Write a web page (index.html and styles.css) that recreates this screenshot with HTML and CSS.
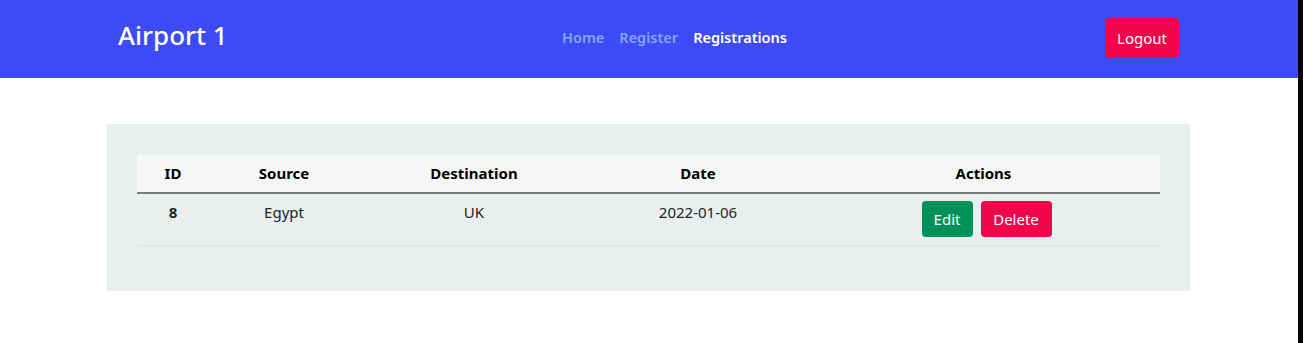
FILE: index.html
```html
<!DOCTYPE html>
<html lang="en">
<head>
    <meta charset="UTF-8">
    <meta name="viewport" content="width=device-width, initial-scale=1.0">
    <title>Airport 1 - Registrations</title>
    <link rel="stylesheet" href="styles.css">
</head>
<body>
    <!-- Top bar -->
    <header class="topbar">
        <div class="brand">Airport 1</div>
        <nav class="nav">
            <a href="#" class="nav-link">Home</a>
            <a href="#" class="nav-link">Register</a>
            <a href="#" class="nav-link active">Registrations</a>
        </nav>
        <button class="btn btn-red btn-logout">Logout</button>
    </header>

    <div class="card">
        <table class="reg-table">
            <thead>
                <tr>
                    <th class="col-id">ID</th>
                    <th class="col-source">Source</th>
                    <th class="col-dest">Destination</th>
                    <th class="col-date">Date</th>
                    <th class="col-actions">Actions</th>
                </tr>
            </thead>
            <tbody>
                <tr>
                    <td class="id-cell">8</td>
                    <td>Egypt</td>
                    <td>UK</td>
                    <td>2022-01-06</td>
                    <td>
                        <div class="actions">
                            <button class="btn btn-green">Edit</button>
                            <button class="btn btn-red">Delete</button>
                        </div>
                    </td>
                </tr>
            </tbody>
        </table>
    </div>
</body>
</html>
```

FILE: styles.css
```css
html {
    background: #000;
}

body {
    margin: 0 5px 0 0;
    min-height: 100vh;
    background: #fff;
    font-family: 'Noto Sans', 'Open Sans', sans-serif;
    font-size: 15px;
    color: #212529;
}

/* Top bar */
.topbar {
    display: flex;
    align-items: center;
    height: 78px;
    padding: 0 119px 0 118px;
    background-color: #3d4af5;
    box-sizing: border-box;
}

.brand {
    width: 444px;
    color: #fff;
    font-size: 26px;
    font-weight: 500;
    margin-top: -8px;
}

.nav {
    display: flex;
    gap: 15px;
    margin-top: -4px;
}

.nav-link {
    color: #80a8f4;
    font-size: 14.5px;
    font-weight: 600;
    text-decoration: none;
}

.nav-link.active {
    color: #fff;
}

.btn {
    border: none;
    border-radius: 4px;
    color: #fff;
    font-family: inherit;
    font-size: 15px;
    height: 36px;
    padding: 0 12px;
    cursor: pointer;
}

.btn-logout {
    margin-left: auto;
    margin-top: -2px;
    height: 40px;
    width: 74px;
    padding: 0;
}

.btn-red {
    background-color: #f0044b;
}

.btn-green {
    background-color: #00915a;
}

/* Card with table */
.card {
    margin: 46px 0 0 107px;
    width: 1083px;
    padding: 31px 30px 45px;
    box-sizing: border-box;
    background-color: #e9eeee;
}

.reg-table {
    width: 100%;
    border-collapse: collapse;
    text-align: center;
}

.reg-table th {
    background-color: #f5f7f6;
    font-weight: 700;
    color: #000;
    padding: 8px 0;
    line-height: 21px;
    border-bottom: 2px solid #7a7a7a;
}

.reg-table td {
    padding: 7px 0 8px;
    line-height: 22px;
    vertical-align: top;
    border-bottom: 1px solid #dde2e2;
}

.id-cell {
    font-weight: 700;
}

.col-id { width: 72px; }
.col-source { width: 150px; }
.col-dest { width: 230px; }
.col-date { width: 218px; }

.actions {
    display: flex;
    justify-content: center;
    gap: 8px;
    padding-left: 6px;
}

.actions .btn-green {
    width: 51px;
    padding: 0;
}

.actions .btn-red {
    width: 71px;
    padding: 0;
}
```
